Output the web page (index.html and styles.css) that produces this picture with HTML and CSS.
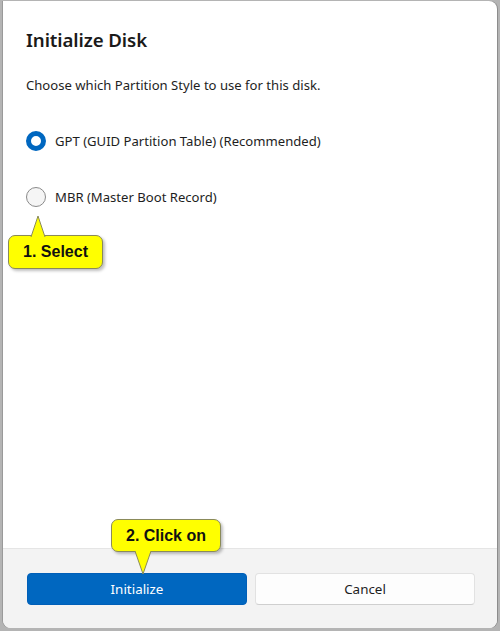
FILE: index.html
```html
<!DOCTYPE html>
<html>
<head>
<meta charset="utf-8">
<link rel="stylesheet" href="styles.css">
</head>
<body>
<div class="dialog">
  <div class="content">
    <h1 class="title">Initialize Disk</h1>
    <p class="desc">Choose which Partition Style to use for this disk.</p>
    <div class="options">
      <label class="option"><span class="radio checked"></span><span>GPT (GUID Partition Table) (Recommended)</span></label>
      <label class="option"><span class="radio"></span><span>MBR (Master Boot Record)</span></label>
    </div>
  </div>
  <div class="footer">
    <button class="btn primary">Initialize</button>
    <button class="btn secondary">Cancel</button>
  </div>
</div>
<div class="callout callout-1"><svg class="tail" width="16" height="22" viewBox="0 0 16 22"><path d="M1 22 L8 1 L15 22" fill="#ffff00" stroke="#8a8a5a" stroke-width="1"/></svg><span>1. Select</span></div>
<div class="callout callout-2"><svg class="tail down" width="18" height="24" viewBox="0 0 18 24"><path d="M1 0 L9 23 L17 0" fill="#ffff00" stroke="#8a8a5a" stroke-width="1"/></svg><span>2. Click on</span></div>
</body>
</html>
```
FILE: styles.css
```css
* { box-sizing: border-box; }
html, body { margin: 0; padding: 0; }
body {
  width: 500px;
  height: 631px;
  background: #b4b4b4;
  padding: 1px 3px 3px 3px;
  font-family: "Noto Sans", "Open Sans", sans-serif;
  position: relative;
  overflow: hidden;
}
.dialog {
  width: 494px;
  height: 627px;
  background: #ffffff;
  border-radius: 0 8px 8px 8px;
  display: flex;
  flex-direction: column;
  overflow: hidden;
  box-shadow: 1px 0 0 #8c8c8c, -1px 0 0 #9a9a9a;
}
.content {
  flex: 1;
  padding: 26px 23px 0 23px;
}
.title {
  margin: 0;
  font-size: 18.7px;
  font-weight: 600;
  color: #1a1a1a;
  line-height: 26px;
  letter-spacing: -0.1px;
}
.desc {
  margin: 22px 0 0 0;
  font-size: 13.1px;
  color: #1e1e1e;
  line-height: 20px;
}
.options {
  margin-top: 36px;
  display: flex;
  flex-direction: column;
  gap: 36px;
}
.option {
  display: flex;
  align-items: center;
  gap: 9px;
  font-size: 13.1px;
  color: #1e1e1e;
  line-height: 20px;
}
.radio {
  width: 20px;
  height: 20px;
  border-radius: 50%;
  border: 1px solid #8a8a8a;
  background: #f5f5f5;
  flex: none;
}
.radio.checked {
  border: 5px solid #0067c0;
  background: #ffffff;
}
.footer {
  height: 80px;
  background: #f3f3f3;
  border-top: 1px solid #e5e5e5;
  display: flex;
  gap: 8px;
  padding: 24px 22px 0 24px;
}
.btn {
  flex: 1;
  height: 32px;
  border-radius: 4px;
  font-family: inherit;
  font-size: 13.4px;
}
.primary {
  background: #0067c0;
  color: #ffffff;
  border: 1px solid #005fb8;
}
.secondary {
  background: #fdfdfd;
  color: #1e1e1e;
  border: 1px solid #e2e2e2;
  border-bottom-color: #cfcfcf;
}
.callout {
  position: absolute;
  background: #ffff00;
  border: 1px solid #8a8a5a;
  border-radius: 7px;
  font-family: "Liberation Sans", Arial, sans-serif;
  font-weight: bold;
  font-size: 16px;
  color: #111;
  display: flex;
  align-items: center;
  justify-content: center;
  box-shadow: 2px 2px 3px rgba(0,0,0,0.25);
}
.callout span { position: relative; z-index: 2; }
.callout-1 {
  left: 8px;
  top: 235px;
  width: 95px;
  height: 34px;
}
.callout-2 {
  left: 111px;
  top: 519px;
  width: 110px;
  height: 33px;
}
.tail {
  position: absolute;
  z-index: 1;
}
.callout-1 .tail { left: 21px; top: -21px; }
.callout-2 .tail { left: 22px; top: 31px; }
```
